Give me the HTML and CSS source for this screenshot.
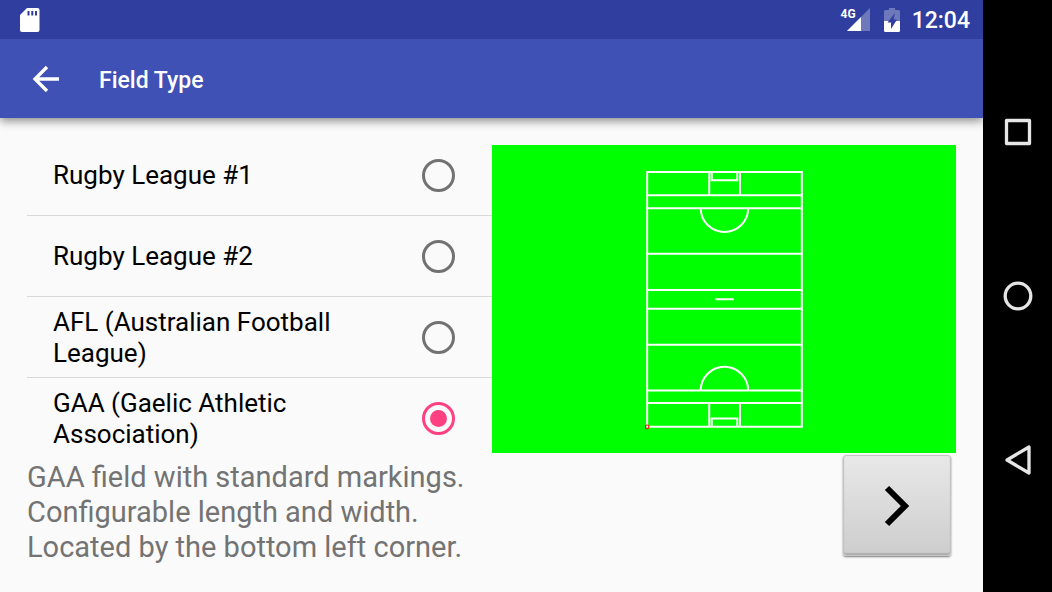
FILE: index.html
```html
<!DOCTYPE html>
<html lang="en">
<head>
<meta charset="utf-8">
<meta name="viewport" content="width=device-width, initial-scale=1">
<title>Field Type</title>
<link rel="stylesheet" href="styles.css">
</head>
<body>
<div class="app">
  <div class="status">
    <svg class="sd" width="20" height="24" viewBox="0 0 20 24" aria-hidden="true"><path fill="#fff" d="M7 0h10.500a2 2 0 0 1 2 2v20a2 2 0 0 1-2 2H2a2 2 0 0 1-2-2V7z"/><path fill="#303f9f" d="M7.500 3h2v4.500h-2zM11.300 3h2v4.500h-2zM15 3h2v4.500h-2z"/></svg>
    <div class="signal">
      <span class="network">4G</span>
      <svg width="23" height="23" viewBox="0 0 23 23" aria-hidden="true"><path fill="#fff" fill-opacity=".3" d="M23 0v23H0z"/><path fill="#fff" d="M14 9v14H0z"/></svg>
    </div>
    <svg class="battery" width="16" height="24" viewBox="0 0 16 24" aria-hidden="true"><path fill="#fff" fill-opacity=".3" d="M5 0h6v2h3.500A1.500 1.500 0 0 1 16 3.500V13H0V3.500A1.500 1.500 0 0 1 1.500 2H5z"/><path fill="#fff" d="M0 13h16v9.500a1.500 1.500 0 0 1-1.500 1.500h-13A1.500 1.500 0 0 1 0 22.500z"/><path fill="#303f9f" d="M11 5 3.500 14.500H7V21l6-9.500H9.500z"/></svg>
    <time class="clock">12:04</time>
  </div>
  <header class="bar">
    <button class="back" type="button" aria-label="Navigate up"><svg width="28" height="28" viewBox="0 0 28 28" fill="none" stroke="#fff" stroke-width="3.300" aria-hidden="true"><path d="M27 14H3M15 2 3 14l12 12"/></svg></button>
    <h1 class="title">Field Type</h1>
  </header>
  <main class="content">
    <div class="list" role="radiogroup" aria-label="Field type">
      <label class="item"><span>Rugby League #1</span><input class="radio" type="radio" name="field"></label>
      <label class="item"><span>Rugby League #2</span><input class="radio" type="radio" name="field"></label>
      <label class="item"><span>AFL (Australian Football League)</span><input class="radio" type="radio" name="field"></label>
      <label class="item"><span>GAA (Gaelic Athletic Association)</span><input class="radio" type="radio" name="field" checked></label>
    </div>
    <div class="preview">
      <svg class="pitch" viewBox="0 0 464 308" role="img" aria-label="GAA field markings">
        <g fill="none" stroke="#fff" stroke-width="2">
          <path d="M155 27h154.500v254.500H155z"/>
          <path d="M155 50.300h154.500M155 63.200h154.500M155 108.700h154.500M155 144.800h154.500M155 163.500h154.500M155 199.500h154.500M155 245.300h154.500M155 257.800h154.500"/>
          <path d="M217 27v23.300M247.700 27v23.300M219.500 27v8.200h25.500v-8.200"/>
          <path d="M217 257.800v23.700M247.700 257.800v23.700M219.500 281.500v-8.200h25.500v8.200"/>
          <path d="M208.500 63.200a23.700 23.700 0 0 0 47.400 0M208.500 245.300a23.700 23.700 0 0 1 47.400 0M223 154h18.500"/>
        </g>
        <circle cx="155" cy="281.500" r="1.800" fill="none" stroke="#f00" stroke-width="1.200"/>
      </svg>
    </div>
    <p class="description">GAA field with standard markings.<br>Configurable length and width.<br>Located by the bottom left corner.</p>
    <button class="next" type="button" aria-label="Next"><svg width="28" height="42" viewBox="0 0 28 42" fill="none" stroke="#000" stroke-width="6" aria-hidden="true"><path d="m4 3 18 18L4 39"/></svg></button>
  </main>
</div>
<nav class="system" aria-label="System">
  <button class="key" type="button" aria-label="Overview"><svg width="30" height="30" viewBox="0 0 30 30" fill="none" stroke="#e6e6e6" stroke-width="3.300" stroke-linejoin="round" aria-hidden="true"><path d="M3.500 3.500h23v23h-23z"/></svg></button>
  <button class="key" type="button" aria-label="Home"><svg width="30" height="30" viewBox="0 0 30 30" fill="none" stroke="#e6e6e6" stroke-width="3.300" aria-hidden="true"><circle cx="15" cy="15" r="12.800"/></svg></button>
  <button class="key" type="button" aria-label="Back"><svg width="30" height="30" viewBox="0 0 30 30" fill="none" stroke="#e6e6e6" stroke-width="3.300" stroke-linejoin="round" aria-hidden="true"><path d="M26 2v26L4 15z"/></svg></button>
</nav>
</body>
</html>
```
FILE: styles.css
```css
* {
  box-sizing: border-box;
}

body {
  display: flex;
  min-height: 100vh;
  margin: 0;
  background: #fafafa;
  color: #000;
  font-family: Roboto, "Liberation Sans", sans-serif;
}

button {
  display: grid;
  place-items: center;
  padding: 0;
  border: 0;
  background: none;
}

svg {
  display: block;
}

.app {
  display: flex;
  flex: 1;
  flex-direction: column;
  min-width: 0;
}

.status {
  display: flex;
  align-items: center;
  height: 39px;
  padding: 0 13px 0 20px;
  background: #303f9f;
  color: #fff;
}

.signal {
  display: flex;
  margin-left: auto;
}

.network {
  margin-right: -9px;
  font-size: 12px;
  font-weight: 700;
  line-height: 12px;
}

.battery {
  margin: 0 12px 0 14px;
}

.clock {
  padding-top: 2px;
  font-size: 23px;
  font-weight: 500;
}

.bar {
  display: flex;
  align-items: center;
  height: 79px;
  padding-left: 32px;
  gap: 39px;
  background: #3f51b5;
  box-shadow: 0 3px 9px rgba(0, 0, 0, 0.45);
  clip-path: inset(0 0 -20px 0);
  color: #fff;
}

.title {
  margin: 0;
  padding-top: 3px;
  font-size: 23px;
  font-weight: 500;
}

.content {
  display: grid;
  flex: 1;
  grid-template-columns: 1fr 1fr;
  grid-template-rows: 1fr auto;
  padding: 27px;
}

.list {
  margin-top: -10px;
  margin-bottom: -6px;
}

.item {
  display: flex;
  align-items: center;
  justify-content: space-between;
  height: 81px;
  padding: 0 37px 0 26px;
  border-bottom: 1px solid #d9d9d9;
  font-size: 26px;
  line-height: 31px;
}

.item:last-child {
  border-bottom: 0;
}

.item span {
  max-width: 300px;
  padding-top: 1px;
}

.radio {
  display: grid;
  flex: none;
  place-items: center;
  width: 33px;
  height: 33px;
  margin: 0;
  border: 3px solid #727272;
  border-radius: 50%;
  appearance: none;
}

.radio:checked {
  border-color: #ff4081;
}

.radio:checked::before {
  width: 17px;
  height: 17px;
  border-radius: 50%;
  background: #ff4081;
  content: "";
}

.preview {
  display: grid;
  background: #0f0;
}

.pitch {
  width: 100%;
  height: 100%;
}

.description {
  margin: 0;
  padding-top: 7px;
  color: #737373;
  font-size: 29px;
  line-height: 35px;
  white-space: nowrap;
}

.next {
  justify-self: end;
  width: 108px;
  height: 101px;
  margin: 2px 5px 0 0;
  border: 1px solid #c4c4c4;
  border-radius: 3px;
  background: linear-gradient(#e8e8e8, #cdcdcd);
  box-shadow: 0 1px 2px rgba(0, 0, 0, 0.5), inset 0 -2px 1px #b0b0b0;
}

.system {
  display: flex;
  flex: none;
  flex-direction: column;
  justify-content: center;
  width: 69px;
  background: #000;
}

.key {
  height: 164px;
}
```
